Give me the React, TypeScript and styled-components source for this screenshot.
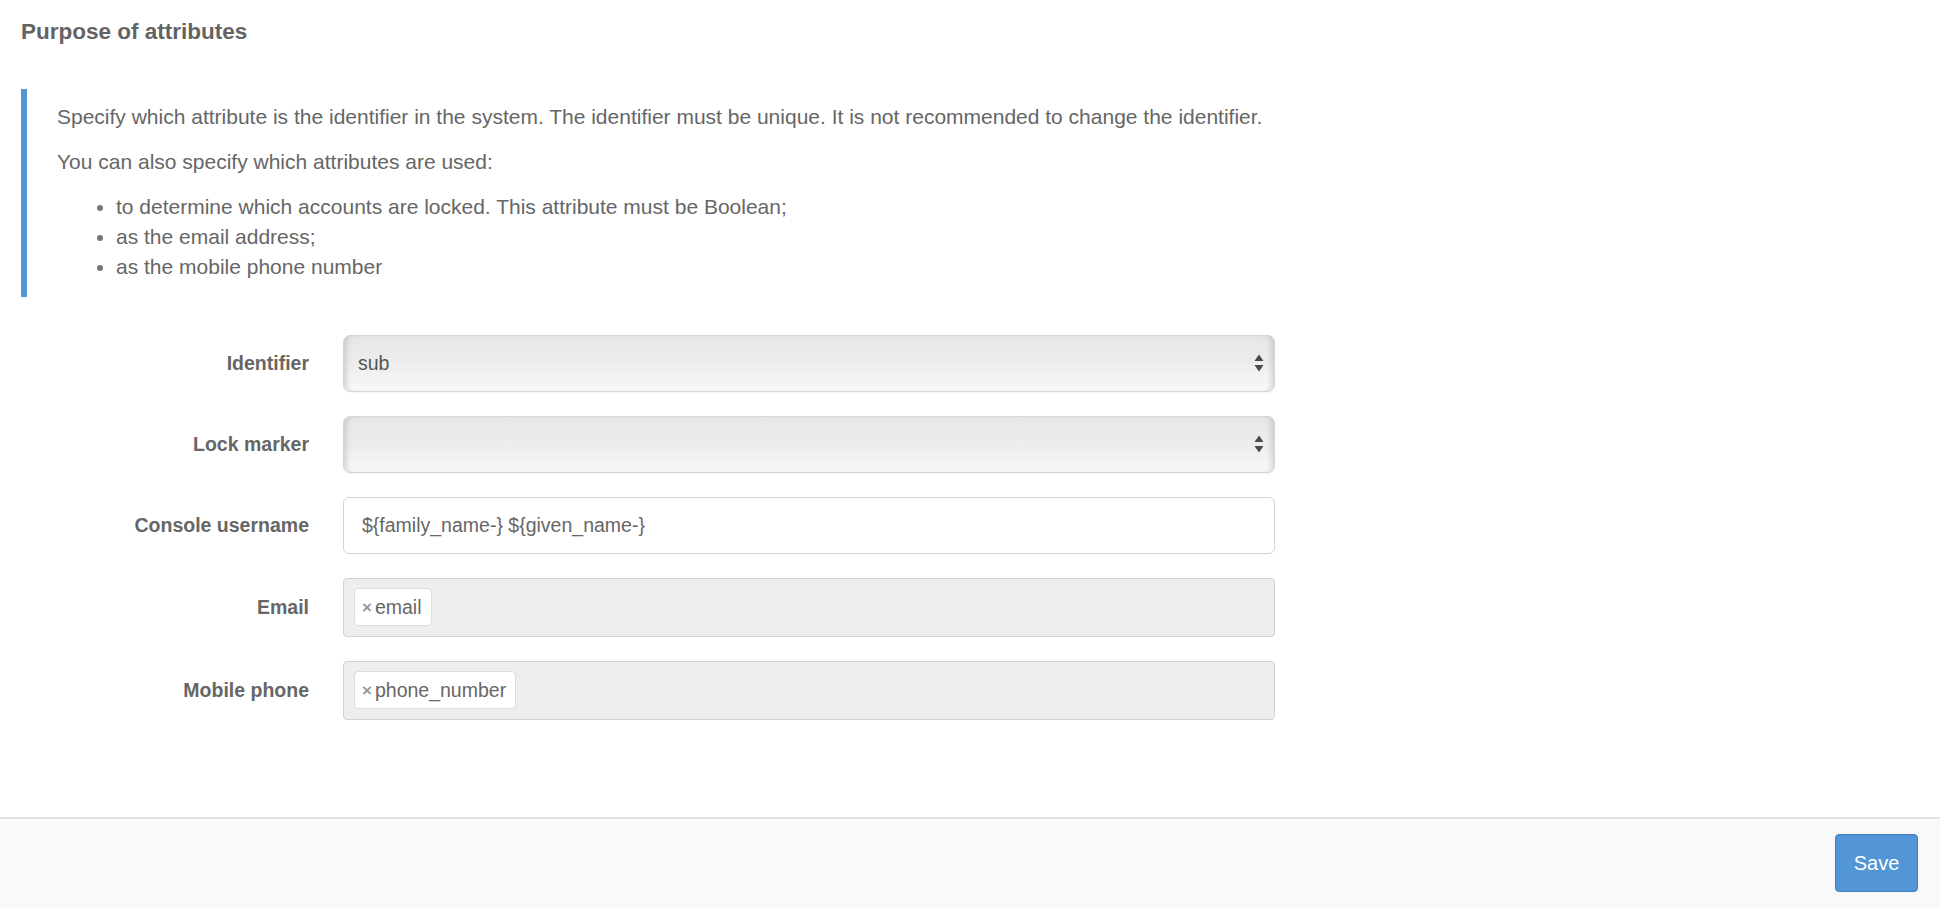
import React from "react";
import styled, { createGlobalStyle } from "styled-components";

const Global = createGlobalStyle`
  html, body { margin: 0; padding: 0; background: #fff; }
  body {
    font-family: "Liberation Sans", Arial, Helvetica, sans-serif;
    color: #666;
    font-size: 21px;
    line-height: 30px;
  }
  * { box-sizing: border-box; }
`;

const Page = styled.div`
  display: flex;
  flex-direction: column;
  height: 908px;
`;

const Content = styled.main`
  flex: 1;
  padding: 20px 0 0 21px;
`;

const Heading = styled.h4`
  margin: 0;
  font-size: 22.5px;
  line-height: 24.75px;
  font-weight: 700;
  color: #636363;
`;

const Note = styled.blockquote`
  margin: 44px 0 0 0;
  width: 1262px;
  padding: 13px 0 15px 30px;
  border-left: 6px solid #5296d5;
  font-size: 21px;
  line-height: 30px;
  color: #666;
`;

const Para = styled.p`
  margin: 0 0 15px 0;
`;

const List = styled.ul`
  margin: 0;
  padding-left: 59px;
  list-style: disc;
  li::marker { color: #777; }
`;

const Form = styled.form`
  margin-top: 38px;
  display: flex;
  flex-direction: column;
  gap: 24px;
`;

const Row = styled.div`
  display: grid;
  grid-template-columns: 288px 932px;
  column-gap: 34px;
  align-items: center;
`;

const Label = styled.label`
  text-align: right;
  font-weight: 700;
  font-size: 19.5px;
  color: #666;
`;

const SelectBox = styled.div`
  height: 57px;
  display: flex;
  align-items: center;
  justify-content: space-between;
  padding: 0 10px 0 14px;
  border: 1px solid #d6d6d6;
  border-radius: 7px;
  background: linear-gradient(to bottom, #e6e6e6 0%, #ececec 45%, #f8f8f8 100%);
  box-shadow:
    inset 6px 0 5px -3px rgba(0, 0, 0, 0.12),
    inset -6px 0 5px -3px rgba(0, 0, 0, 0.12),
    0 1px 1px rgba(0, 0, 0, 0.04);
  font-size: 19.5px;
  color: #555;
`;

const TextInput = styled.input`
  height: 57px;
  width: 100%;
  padding: 0 18px;
  border: 1px solid #d4d4d4;
  border-radius: 6px;
  background: #fff;
  font-family: inherit;
  font-size: 19.5px;
  color: #666;
  outline: none;
`;

const TagBox = styled.div`
  height: 59px;
  display: flex;
  align-items: center;
  padding: 0 10px;
  border: 1px solid #d2d2d2;
  border-radius: 4px;
  background: #eee;
`;

const Chip = styled.span`
  height: 38px;
  display: inline-flex;
  align-items: center;
  gap: 3px;
  padding: 0 9px 0 7px;
  background: #fff;
  border: 1px solid #dcdcdc;
  border-radius: 4px;
  font-size: 19.5px;
  color: #666;
`;

const ChipX = styled.span`
  font-size: 17px;
  font-weight: 700;
  color: #999;
  line-height: 1;
  margin-top: 1px;
`;

const Footer = styled.footer`
  height: 91px;
  border-top: 2px solid #e2e2e2;
  background: #f9f9f9;
  display: flex;
  align-items: center;
  justify-content: flex-end;
  padding: 0 22px 1px 0;
`;

const SaveButton = styled.button`
  height: 58px;
  width: 83px;
  border: 1px solid #3f7fbf;
  border-radius: 4px;
  background: #5296d5;
  color: #fff;
  font-family: inherit;
  font-size: 20px;
  cursor: pointer;
`;

const Arrows = () => (
  <svg width="10" height="18" viewBox="0 0 10 18" aria-hidden="true">
    <path d="M5 0.5 L9.5 7 H0.5 Z" fill="#4a4a4a" />
    <path d="M5 17.5 L9.5 11 H0.5 Z" fill="#4a4a4a" />
  </svg>
);

const Select = ({ value }: { value: string }) => (
  <SelectBox role="combobox">
    <span>{value}</span>
    <Arrows />
  </SelectBox>
);

const Tag = ({ text }: { text: string }) => (
  <Chip>
    <ChipX>×</ChipX>
    {text}
  </Chip>
);

export default function App() {
  return (
    <Page>
      <Global />
      <Content>
        <Heading>Purpose of attributes</Heading>
        <Note>
          <Para>
            Specify which attribute is the identifier in the system. The identifier must be unique. It is not recommended to change the identifier.
          </Para>
          <Para>You can also specify which attributes are used:</Para>
          <List>
            <li>to determine which accounts are locked. This attribute must be Boolean;</li>
            <li>as the email address;</li>
            <li>as the mobile phone number</li>
          </List>
        </Note>
        <Form onSubmit={(e) => e.preventDefault()}>
          <Row>
            <Label>Identifier</Label>
            <Select value="sub" />
          </Row>
          <Row>
            <Label>Lock marker</Label>
            <Select value="" />
          </Row>
          <Row>
            <Label>Console username</Label>
            <TextInput defaultValue="${family_name-} ${given_name-}" />
          </Row>
          <Row>
            <Label>Email</Label>
            <TagBox>
              <Tag text="email" />
            </TagBox>
          </Row>
          <Row>
            <Label>Mobile phone</Label>
            <TagBox>
              <Tag text="phone_number" />
            </TagBox>
          </Row>
        </Form>
      </Content>
      <Footer>
        <SaveButton type="button">Save</SaveButton>
      </Footer>
    </Page>
  );
}
